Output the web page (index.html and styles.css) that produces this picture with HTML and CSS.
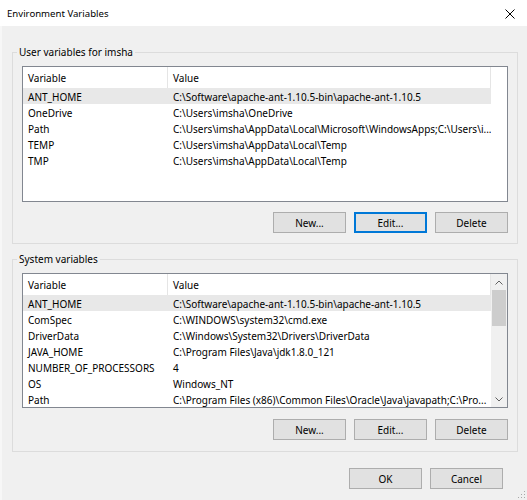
FILE: index.html
```html
<!DOCTYPE html>
<html>
<head>
<meta charset="utf-8">
<title>Environment Variables</title>
<link rel="stylesheet" href="styles.css">
</head>
<body>
<div class="window">
  <div class="titlebar">
    <span class="title">Environment Variables</span>
    <svg class="close" width="10" height="10" viewBox="0 0 10 10"><path d="M0.5 0.5L9.5 9.5M9.5 0.5L0.5 9.5" stroke="#000" stroke-width="1" fill="none"/></svg>
  </div>
  <div class="body">
    <section class="group user">
      <div class="legend">User variables for imsha</div>
      <div class="list list-user">
        <div class="table">
          <div class="row head"><div class="c1">Variable</div><div class="c2">Value</div></div>
          <div class="row sel"><div class="c1">ANT_HOME</div><div class="c2">C:\Software\apache-ant-1.10.5-bin\apache-ant-1.10.5</div></div>
          <div class="row"><div class="c1">OneDrive</div><div class="c2">C:\Users\imsha\OneDrive</div></div>
          <div class="row"><div class="c1">Path</div><div class="c2">C:\Users\imsha\AppData\Local\Microsoft\WindowsApps;C:\Users\i...</div></div>
          <div class="row"><div class="c1">TEMP</div><div class="c2">C:\Users\imsha\AppData\Local\Temp</div></div>
          <div class="row"><div class="c1">TMP</div><div class="c2">C:\Users\imsha\AppData\Local\Temp</div></div>
        </div>
        <div class="gutter"></div>
      </div>
      <div class="btnrow">
        <button class="btn">New...</button>
        <button class="btn focus">Edit...</button>
        <button class="btn">Delete</button>
      </div>
    </section>

    <section class="group sys">
      <div class="legend">System variables</div>
      <div class="list list-sys">
        <div class="table">
          <div class="row head"><div class="c1">Variable</div><div class="c2">Value</div></div>
          <div class="row sel"><div class="c1">ANT_HOME</div><div class="c2">C:\Software\apache-ant-1.10.5-bin\apache-ant-1.10.5</div></div>
          <div class="row"><div class="c1">ComSpec</div><div class="c2">C:\WINDOWS\system32\cmd.exe</div></div>
          <div class="row"><div class="c1">DriverData</div><div class="c2">C:\Windows\System32\Drivers\DriverData</div></div>
          <div class="row"><div class="c1">JAVA_HOME</div><div class="c2">C:\Program Files\Java\jdk1.8.0_121</div></div>
          <div class="row"><div class="c1">NUMBER_OF_PROCESSORS</div><div class="c2">4</div></div>
          <div class="row"><div class="c1">OS</div><div class="c2">Windows_NT</div></div>
          <div class="row"><div class="c1">Path</div><div class="c2">C:\Program Files (x86)\Common Files\Oracle\Java\javapath;C:\Pro...</div></div>
        </div>
        <div class="scrollbar">
          <div class="arrow"><svg width="8" height="5" viewBox="0 0 8 5"><path d="M0.5 4.5L4 1L7.5 4.5" stroke="#606060" stroke-width="1" fill="none"/></svg></div>
          <div class="thumb"></div>
          <div class="track"></div>
          <div class="arrow"><svg width="8" height="5" viewBox="0 0 8 5"><path d="M0.5 0.5L4 4L7.5 0.5" stroke="#606060" stroke-width="1" fill="none"/></svg></div>
        </div>
      </div>
      <div class="btnrow">
        <button class="btn">New...</button>
        <button class="btn">Edit...</button>
        <button class="btn">Delete</button>
      </div>
    </section>

    <div class="footer">
      <button class="btn">OK</button>
      <button class="btn">Cancel</button>
    </div>

    <svg class="grip" width="10" height="10" viewBox="0 0 10 10">
      <rect x="8" y="2" width="1" height="1" fill="#a8a8a8"/>
      <rect x="5" y="5" width="1" height="1" fill="#a8a8a8"/>
      <rect x="8" y="5" width="1" height="1" fill="#a8a8a8"/>
      <rect x="2" y="8" width="1" height="1" fill="#a8a8a8"/>
      <rect x="5" y="8" width="1" height="1" fill="#a8a8a8"/>
      <rect x="8" y="8" width="1" height="1" fill="#a8a8a8"/>
    </svg>
  </div>
</div>
</body>
</html>
```

FILE: styles.css
```css
* { box-sizing: border-box; }

html, body {
  margin: 0;
  padding: 0;
  background: #f0f0f0;
}

body {
  font-family: "Noto Sans", "Open Sans", sans-serif;
  font-size: 10px;
  color: #000;
}

.window {
  width: 527px;
  height: 500px;
  display: flex;
  flex-direction: column;
  overflow: hidden;
}

.titlebar {
  height: 26px;
  background: #fff;
  display: flex;
  align-items: center;
  justify-content: space-between;
  padding: 1px 12px 0 7px;
  flex: none;
}

.title {
  font-size: 9.6px;
  line-height: 14px;
}

.close { display: block; }

.body {
  position: relative;
  flex: 1;
  background: #f0f0f0;
  padding: 0 9px 0 10px;
  border-left: 2px solid #f7f7f7;
}

.group {
  border: 1px solid #dcdcdc;
  padding: 0 9px 10px 9px;
  display: flex;
  flex-direction: column;
}

.group.user { margin-top: 26px; }
.group.sys { margin-top: 15px; padding-bottom: 11px; }

.legend {
  align-self: flex-start;
  margin: -8px 0 0 -5px;
  padding: 0 2px;
  line-height: 15px;
  height: 14px;
  background: #f0f0f0;
  white-space: nowrap;
}

.list {
  margin-top: 7px;
  border: 1px solid #828790;
  background: #fff;
  display: flex;
  overflow: hidden;
}

.list-user { height: 136px; }
.list-sys { height: 135px; }

.table {
  flex: 1;
  min-width: 0;
  display: flex;
  flex-direction: column;
}

.row {
  display: flex;
  height: 16px;
  line-height: 18px;
  white-space: nowrap;
  flex: none;
}

.row.head {
  height: 21px;
  line-height: 23px;
}

.row .c1 {
  width: 145px;
  padding-left: 5px;
  flex: none;
  overflow: hidden;
}

.row .c2 {
  flex: 1;
  min-width: 0;
  padding-left: 5px;
  overflow: hidden;
}

.row.head .c1 { border-right: 1px solid #e5e5e5; }
.row.head .c2 { border-right: 1px solid #e5e5e5; }

.row.sel { background: #e8e8e8; }

.gutter {
  width: 16px;
  flex: none;
}

.scrollbar {
  width: 16px;
  flex: none;
  background: #f0f0f0;
  display: flex;
  flex-direction: column;
}

.arrow {
  height: 16px;
  flex: none;
  display: flex;
  align-items: center;
  justify-content: center;
}

.arrow svg { display: block; }

.thumb {
  height: 36px;
  margin: 0 1px;
  background: #cdcdcd;
  flex: none;
}

.track { flex: 1; }

.btnrow {
  display: flex;
  justify-content: flex-end;
  gap: 8px;
  margin-top: 10px;
}

.sys .btnrow { margin-top: 11px; }

.btn {
  width: 73px;
  height: 21px;
  padding: 1px 0 0 0;
  margin: 0;
  font-family: inherit;
  font-size: 10px;
  color: #000;
  background: #e1e1e1;
  border: 1px solid #adadad;
  border-radius: 0;
  line-height: 18px;
  text-align: center;
}

.btn.focus {
  border: 1px solid #0078d7;
  box-shadow: inset 0 0 0 1px #0078d7;
}

.footer {
  display: flex;
  justify-content: flex-end;
  gap: 8px;
  margin-top: 16px;
  padding-right: 15px;
}

.grip {
  position: absolute;
  right: 1px;
  bottom: 1px;
  display: block;
}
```
